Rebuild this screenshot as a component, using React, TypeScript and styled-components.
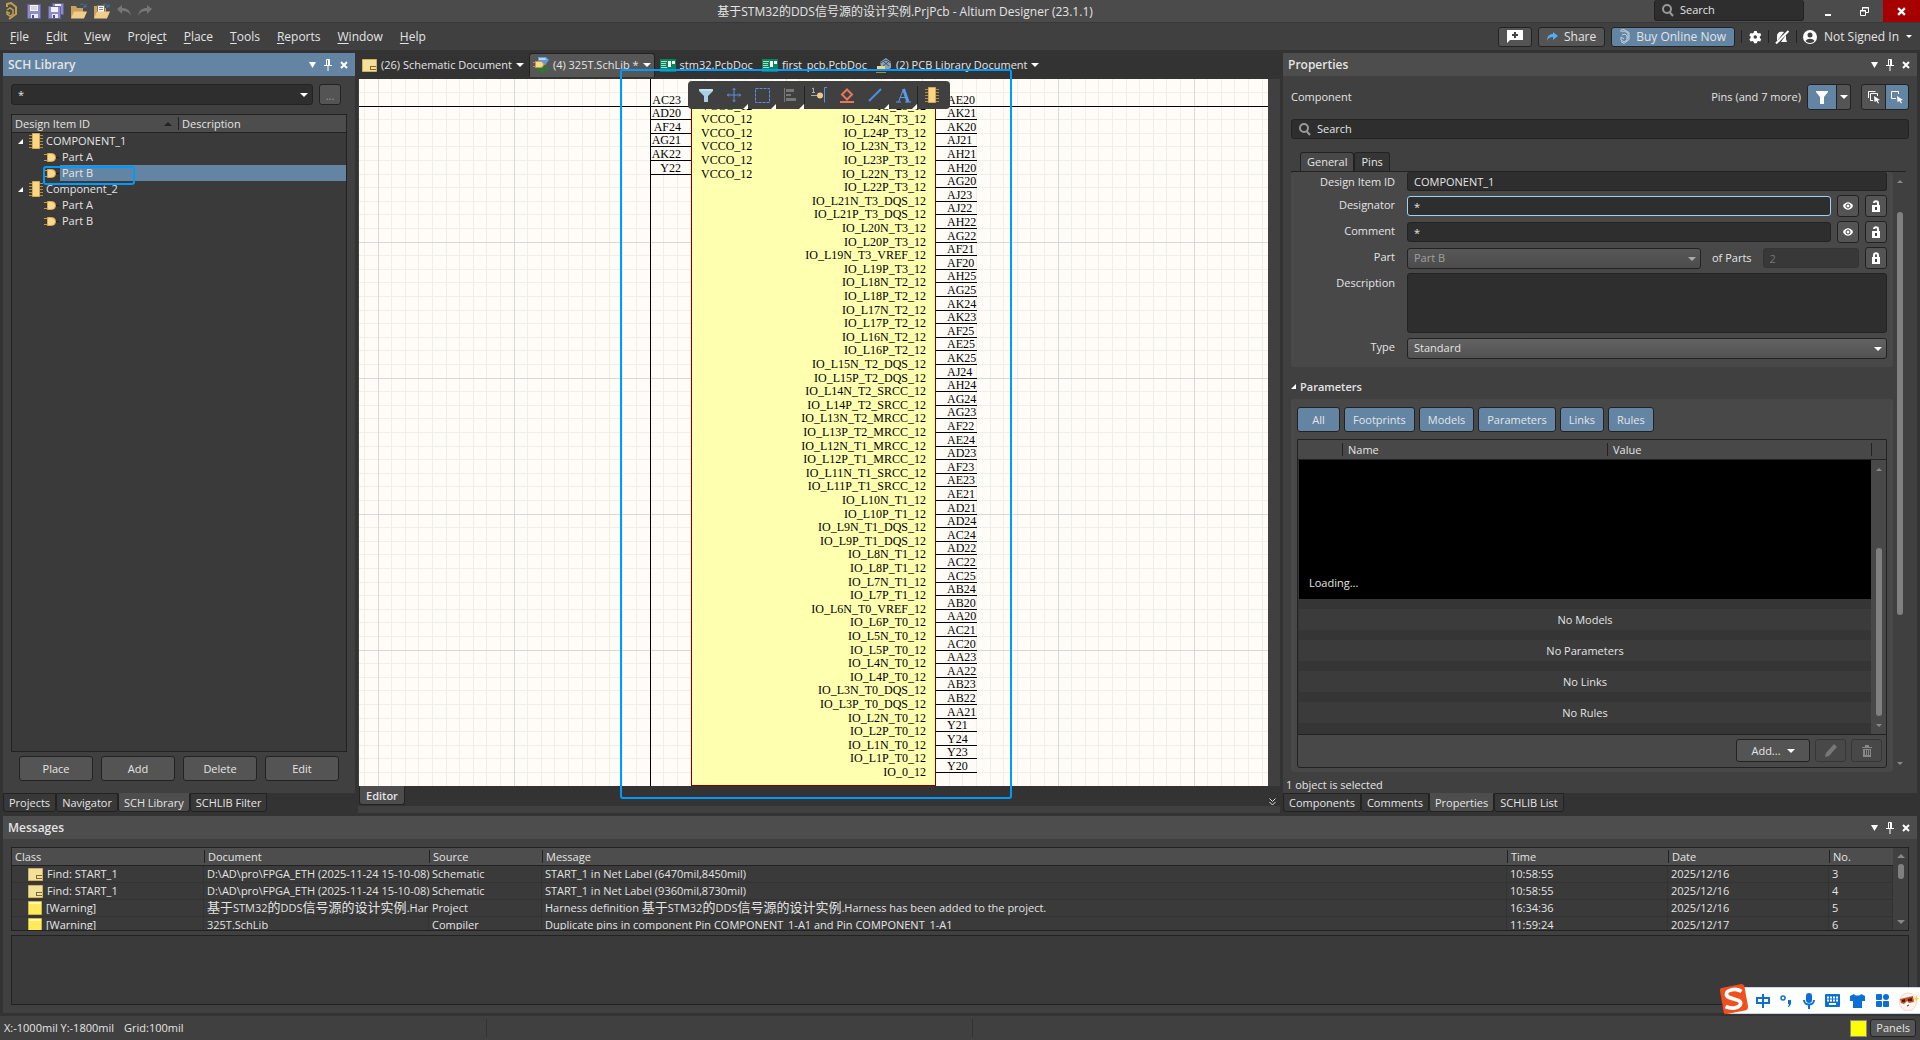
import React from "react";
import styled, { createGlobalStyle, css } from "styled-components";

const c = {
  gap: "#333333",
  panel: "#404040",
  head: "#4d4d4d",
  group: "#484848",
  list: "#3a3a3a",
  field: "#2e2e2e",
  edge: "#222222",
  button: "#545454",
  accent: "#6384a3",
  text: "#e4e4e4",
  mark: "#0099ff",
};

const Global = createGlobalStyle`
  * { box-sizing: border-box; }
  body { margin: 0; background: ${c.gap}; }
  body, button, input, select, textarea {
    font-family: "Open Sans", "Noto Sans", "Noto Sans CJK SC", sans-serif;
    font-size: 11px;
    line-height: 16px;
    color: ${c.text};
  }
  button, input, select, textarea { margin: 0; padding: 0; border: 0; outline: 0; }
  svg { display: block; flex: none; }
`;

/* ---------- icons ---------- */

const Caret = ({ w = 8, up = false, fill = "#fff" }: { w?: number; up?: boolean; fill?: string }) => (
  <svg width={w} height={w / 2} viewBox="0 0 8 4">
    <path d={up ? "M0 4h8L4 0z" : "M0 0h8L4 4z"} fill={fill} />
  </svg>
);

const Pin = () => (
  <svg width="8" height="12" viewBox="0 0 8 12" fill="none" stroke="#fff">
    <path d="M2.5 6.5v-6h3v6M0 6.5h8M4 7v5" />
    <path d="M5 1v5" strokeWidth="2" />
  </svg>
);

const Cross = ({ size = 8 }: { size?: number }) => (
  <svg width={size} height={size} viewBox="0 0 8 8" stroke="#fff" strokeWidth="2">
    <path d="M1 1l6 6M7 1L1 7" />
  </svg>
);

const Magnifier = () => (
  <svg width="12" height="14" viewBox="0 0 12 14" fill="none" stroke="#999" strokeWidth="2">
    <circle cx="5" cy="6" r="4" />
    <path d="M7.500 9l3.500 4" />
  </svg>
);

const Logo = () => (
  <svg width="12" height="18" viewBox="0 0 12 18" fill="none" stroke="#c0a050">
    <path d="M1 5V2l4-1 5 4v7l-7 5" strokeWidth="2" />
    <path d="M1 8l3-2 3 2v4l-3 2-3-2V10l3 1.500" strokeWidth="1.500" />
  </svg>
);

const Disk = () => (
  <svg width="14" height="15" viewBox="0 0 14 15">
    <path d="M.5.5h13v14H.5z" fill="#8d8bc8" stroke="#65639c" />
    <path d="M3 1h8v6H3z" fill="#f2f2f6" />
    <path d="M4 3h6M4 5h6" stroke="#bbb" />
    <path d="M4 10h7v4H4z" fill="#e8e8ee" />
    <path d="M5 11h2v3H5z" fill="#504e80" />
  </svg>
);

const Disks = () => (
  <svg width="16" height="16" viewBox="0 0 16 16">
    <path d="M4.500.5h11v11h-11z" fill="#8d8bc8" stroke="#65639c" />
    <path d="M7 1h6v3H7z" fill="#f2f2f6" />
    <path d="M.5 3.500h12v12H.5z" fill="#8d8bc8" stroke="#65639c" />
    <path d="M3 4h7v5H3z" fill="#f2f2f6" />
    <path d="M4 11h6v4H4z" fill="#e8e8ee" />
    <path d="M5 12h2v3H5z" fill="#504e80" />
  </svg>
);

const Folder = ({ doc = false }: { doc?: boolean }) => (
  <svg width="16" height="16" viewBox="0 0 16 16">
    <path d="M0 15V3h5l1 2h6v10z" fill="#c9a25c" />
    {doc && <path d="M3.500 2.500h7v9h-7z" fill="#f6f6f6" stroke="#777" />}
    {doc && <path d="M5 4.500h4M5 6.500h4" stroke="#888" />}
    <path d="M0 15.500l3-7h13l-3 7z" fill="#f0cd88" />
    <path d="M9 2c2-2 4-1 5 2m-2 0h3V1" fill="none" stroke="#3f78a8" />
  </svg>
);

const Undo = ({ flip = false }: { flip?: boolean }) => (
  <svg width="14" height="12" viewBox="0 0 14 12">
    <path
      d={flip ? "M14 4L9 0v3C4 3 1 5 0 11c2-4 5-5 9-5v3z" : "M0 4l5-4v3c5 0 8 2 9 8-2-4-5-5-9-5v3z"}
      fill="#767676"
    />
  </svg>
);

const Chip = () => (
  <svg width="14" height="16" viewBox="0 0 14 16">
    <path d="M0 2.500h14M0 5.500h14M0 8.500h14M0 11.500h14M0 14.500h14" stroke="#a98d4a" />
    <path d="M3.500.5h7v15h-7z" fill="#f9d687" stroke="#d8ab48" />
  </svg>
);

const Gate = () => (
  <svg width="15" height="9" viewBox="0 0 15 9">
    <path d="M0 1.500h4M0 7.500h4" stroke="#c59a4a" />
    <path d="M12 4.500h3" stroke="#1e1e1e" />
    <path d="M3.500.5h4a4 4 0 0 1 0 8h-4z" fill="#f8d98c" stroke="#d8a850" />
  </svg>
);

const Expander = () => (
  <svg width="5" height="5" viewBox="0 0 5 5">
    <path d="M5 0v5H0z" fill="#fff" />
  </svg>
);

const SheetIcon = () => (
  <svg width="15" height="13" viewBox="0 0 15 13">
    <path d="M.5.5h14v12H.5z" fill="#f3e09a" stroke="#cdb25a" />
    <path d="M8 7.500h6M8 10.500h6M8.500 7v4" stroke="#7f6a2a" />
  </svg>
);

const NoteIcon = () => (
  <svg width="14" height="14" viewBox="0 0 14 14">
    <path d="M.5.5h13v13H.5z" fill="#ffeb5a" stroke="#c9b53c" />
    <path d="M1 1h12v2H1z" fill="#fff7b8" />
  </svg>
);

const LibIcon = () => (
  <svg width="16" height="16" viewBox="0 0 16 16">
    <path d="M6 9l2 6M9 9l1 7M12 8l1 6M4 11l2 3M14 10l1 3" stroke="#2a7a2e" strokeWidth="2" />
    <path d="M5 0h8l3 3-3 4H5z" fill="#5b9ae0" />
    <path d="M6 1h6l2 2H6z" fill="#b5d3f4" />
    <path d="M0 5.500h3M0 9.500h3M10 7.500h3" stroke="#b08c40" />
    <path d="M2.500 4.500h5a3 3 0 0 1 0 6h-5z" fill="#f6da8e" stroke="#c59a4a" />
  </svg>
);

const PcbIcon = () => (
  <svg width="16" height="13" viewBox="0 0 16 13">
    <path d="M0 0h16v13H0z" fill="#0d8459" />
    <path d="M1 2.500h6M1 4.500h5M1 6.500h5M1 8.500h6" stroke="#a8dcc4" />
    <path d="M8 2h3v6H8zM12 2h3v3h-3z" fill="#f2fbf6" />
    <path d="M2 11.500h1M5 11.500h1M8 11.500h1M11 11.500h1" stroke="#d8f0e4" />
  </svg>
);

const PcbLibIcon = () => (
  <svg width="16" height="15" viewBox="0 0 16 15">
    <path d="M4 4l6-4 5 4v6l-4 2-6-3z" fill="#8ba3b5" />
    <path d="M4 5l6-3 5 3M8 4l5 4M7 8l5-4" stroke="#3d5364" fill="none" />
    <path d="M1 8h8v5H1z" fill="#f3d27c" />
    <path d="M0 14.500h10" stroke="#b08c40" />
  </svg>
);

/* ---------- shared controls ---------- */

const Btn = styled.button<{ $on?: boolean; $w?: number; $flat?: boolean }>`
  display: flex;
  align-items: center;
  justify-content: center;
  gap: 6px;
  width: ${(p) => (p.$w ? `${p.$w}px` : "auto")};
  border: 1px solid ${(p) => (p.$flat ? "#363636" : c.edge)};
  border-radius: 3px;
  background: ${(p) => (p.$on ? c.accent : p.$flat ? "transparent" : c.button)};
  white-space: nowrap;
  flex: none;
`;

const fieldBase = css`
  min-width: 0;
  height: 20px;
  padding: 0 6px;
  border: 1px solid ${c.edge};
  border-radius: 3px;
  background: ${c.field};
`;

const Field = styled.input<{ $focus?: boolean }>`
  ${fieldBase}
  flex: 1;
  border-color: ${(p) => (p.$focus ? "#9fd0f5" : c.edge)};
  &:disabled { color: #777; background: #383838; border-color: #343434; }
`;

const Area = styled.textarea`
  ${fieldBase}
  flex: 1;
  height: 60px;
  resize: none;
`;

const SelectBox = styled.div<{ $w?: number }>`
  position: relative;
  display: flex;
  flex: ${(p) => (p.$w ? `0 0 ${p.$w}px` : "1")};
  & > svg { position: absolute; right: 5px; top: 9px; pointer-events: none; }
`;

const SelectInput = styled.select<{ $dark?: boolean }>`
  ${fieldBase}
  flex: 1;
  height: 21px;
  appearance: none;
  background: ${(p) => (p.$dark ? c.field : "linear-gradient(#626262, #525252)")};
  &:disabled { color: #a0a0a0; opacity: 1; background: linear-gradient(#575757, #4c4c4c); }
`;

const SearchBox = styled.label<{ $h: number }>`
  display: flex;
  align-items: center;
  gap: 6px;
  height: ${(p) => p.$h}px;
  padding: 0 7px;
  border: 1px solid ${c.edge};
  border-radius: 3px;
  background: ${c.field};
  & > input { flex: 1; min-width: 0; background: transparent; }
  & > input::placeholder { color: ${c.text}; opacity: 1; }
`;

const Panel = styled.section`
  display: flex;
  flex-direction: column;
  flex: 1;
  min-height: 0;
  background: ${c.panel};
`;

const PanelHead = styled.header<{ $on?: boolean }>`
  display: flex;
  align-items: center;
  gap: 8px;
  height: 23px;
  padding: 0 7px 0 5px;
  background: ${(p) => (p.$on ? c.accent : c.head)};
  flex: none;
`;

const PanelTitle = styled.h2`
  flex: 1;
  margin: 0;
  font-size: 12px;
  line-height: 16px;
  font-weight: 600;
`;

const IconButton = styled.button`
  display: flex;
  align-items: center;
  justify-content: center;
  background: transparent;
  flex: none;
`;

const PanelHeader = ({ title, on }: { title: string; on?: boolean }) => (
  <PanelHead $on={on}>
    <PanelTitle>{title}</PanelTitle>
    <IconButton aria-label="Panel menu"><svg width="7" height="6" viewBox="0 0 7 6"><path d="M0 0h7L3.500 6z" fill="#fff" /></svg></IconButton>
    <IconButton aria-label="Pin panel"><Pin /></IconButton>
    <IconButton aria-label="Close panel"><Cross /></IconButton>
  </PanelHead>
);

const TabStrip = styled.nav`
  display: flex;
  align-items: flex-start;
  height: 23px;
  background: ${c.gap};
  flex: none;
`;

const PanelTab = styled.button<{ $on?: boolean }>`
  height: 19px;
  padding: 0 5px;
  border: 1px solid ${c.edge};
  border-top-color: ${(p) => (p.$on ? c.head : c.edge)};
  border-radius: 0 0 3px 3px;
  background: ${(p) => (p.$on ? c.head : "#383838")};
  white-space: nowrap;
`;

const Thumb = styled.i<{ $h: number }>`
  width: 6px;
  height: ${(p) => p.$h}px;
  border-radius: 3px;
  background: #808080;
`;

/* ---------- page frame ---------- */

const Page = styled.div`
  display: flex;
  flex-direction: column;
  min-width: 1280px;
  height: 100vh;
  min-height: 1040px;
  overflow: hidden;
  background: ${c.gap};
`;

const TitleBar = styled.header`
  display: grid;
  grid-template-columns: 1fr auto 1fr;
  align-items: center;
  height: 23px;
  padding-left: 6px;
  background: #4b4b4b;
  border-bottom: 1px solid #383838;
  flex: none;
`;

const QuickBar = styled.div`
  display: flex;
  align-items: center;
  gap: 6px;
  & > :first-child { margin-right: 3px; }
  & > :nth-child(n + 2) { margin-right: 1px; }
`;

const Caption = styled.h1`
  margin: 0;
  padding: 2px 116px 0 0;
  font-size: 12px;
  line-height: 16px;
  font-weight: 400;
`;

const WindowTools = styled.div`
  display: flex;
  justify-content: flex-end;
  align-self: stretch;
  & > label { width: 150px; border-top: 0; margin-right: 5px; }
`;

const WinButton = styled(IconButton)<{ $close?: boolean }>`
  width: 37px;
  background: ${(p) => (p.$close ? "#a60000" : "transparent")};
`;

const MenuBar = styled.nav`
  display: flex;
  align-items: center;
  gap: 17px;
  height: 27px;
  padding: 0 8px 0 10px;
  background: ${c.panel};
  flex: none;
`;

const MenuItem = styled.button`
  background: transparent;
  font-size: 12px;
  & u { text-underline-offset: 2px; }
`;

const MenuRight = styled.div`
  display: flex;
  align-items: center;
  gap: 6px;
  margin-left: auto;
  & > button { height: 20px; font-size: 12px; }
`;

const Bar = styled.i`
  width: 1px;
  height: 13px;
  background: ${c.edge};
`;

const Work = styled.main`
  display: flex;
  flex: 1;
  min-height: 0;
`;

const SidePanel = styled.div<{ $w: number }>`
  display: flex;
  flex-direction: column;
  flex: 0 0 ${(p) => p.$w}px;
  min-width: 0;
  padding-top: 3px;
  margin: 0 3px;
`;

/* ---------- SCH Library ---------- */

const LibTop = styled.div`
  display: flex;
  gap: 6px;
  padding: 8px 14px 9px 8px;
  & > button { width: 22px; height: 21px; align-items: flex-end; color: #999; }
`;

const Tree = styled.div`
  display: flex;
  flex-direction: column;
  flex: 1;
  margin: 0 8px;
  border: 1px solid ${c.edge};
  background: ${c.list};
`;

const TreeHead = styled.div`
  display: flex;
  align-items: center;
  height: 18px;
  background: ${c.head};
  border-bottom: 1px solid ${c.edge};
  & > span { padding-left: 3px; }
  & > span:first-child { display: flex; align-items: center; justify-content: space-between; width: 166px; padding-right: 6px; }
`;

const TreeRow = styled.div<{ $leaf?: boolean }>`
  position: relative;
  display: flex;
  align-items: center;
  gap: 3px;
  height: 16px;
  padding-left: ${(p) => (p.$leaf ? 32 : 6)}px;
`;

const TreeLabel = styled.span<{ $on?: boolean }>`
  flex: 1;
  margin-left: -2px;
  padding-left: 2px;
  background: ${(p) => (p.$on ? c.accent : "transparent")};
`;

const TreeIcon = styled.span`
  display: flex;
  margin-left: 3px;
`;

const RowMark = styled.i`
  position: absolute;
  left: 31px;
  top: 1px;
  width: 92px;
  height: 19px;
  border: 2px solid ${c.mark};
  border-radius: 3px;
  z-index: 1;
`;

const LibButtons = styled.div`
  display: flex;
  gap: 8px;
  padding: 4px 16px 12px;
  & > button { flex: 1; height: 25px; }
`;

const LibraryPanel = () => (
  <SidePanel $w={352}>
    <Panel>
      <PanelHeader title="SCH Library" on />
      <LibTop>
        <SelectBox>
          <SelectInput $dark aria-label="Filter"><option>*</option></SelectInput>
          <Caret />
        </SelectBox>
        <Btn aria-label="Browse">...</Btn>
      </LibTop>
      <Tree>
        <TreeHead>
          <span>Design Item ID <Caret up fill="#222" /></span>
          <Bar />
          <span>Description</span>
        </TreeHead>
        {["COMPONENT_1", "Component_2"].map((name, i) => (
          <React.Fragment key={name}>
            <TreeRow><Expander /><TreeIcon><Chip /></TreeIcon><TreeLabel>{name}</TreeLabel></TreeRow>
            <TreeRow $leaf><Gate /><TreeLabel>Part A</TreeLabel></TreeRow>
            <TreeRow $leaf><Gate /><TreeLabel $on={i === 0}>Part B</TreeLabel>{i === 0 && <RowMark />}</TreeRow>
          </React.Fragment>
        ))}
      </Tree>
      <LibButtons>
        {["Place", "Add", "Delete", "Edit"].map((t) => <Btn key={t}>{t}</Btn>)}
      </LibButtons>
    </Panel>
    <TabStrip>
      {["Projects", "Navigator", "SCH Library", "SCHLIB Filter"].map((t) => (
        <PanelTab key={t} $on={t === "SCH Library"}>{t}</PanelTab>
      ))}
    </TabStrip>
  </SidePanel>
);

/* ---------- schematic editor ---------- */

const Center = styled.div`
  position: relative;
  display: flex;
  flex-direction: column;
  flex: 1;
  min-width: 0;
  margin-bottom: 3px;
  background: ${c.panel};
`;

const DocTabs = styled.nav`
  display: flex;
  align-items: center;
  gap: 1px;
  height: 29px;
  background: ${c.gap};
  overflow: hidden;
  flex: none;
`;

const DocTab = styled.button<{ $on?: boolean }>`
  display: flex;
  align-items: center;
  gap: 4px;
  height: 24px;
  padding: 0 3px;
  border: 1px solid ${(p) => (p.$on ? c.edge : "transparent")};
  border-bottom: 0;
  border-radius: 3px 3px 0 0;
  background: ${(p) => (p.$on ? "#565656" : "transparent")};
  white-space: nowrap;
`;

const Sheet = styled.div`
  position: relative;
  flex: 1;
  min-height: 0;
  margin: 0 12px 0 1px;
  overflow: hidden;
  background: #fffcf7;
  & > svg { width: 100%; height: 100%; font-family: "Liberation Serif", serif; font-size: 12px; }
`;

const ToolBox = styled.div`
  position: absolute;
  left: 329px;
  top: 2px;
  display: flex;
  align-items: center;
  height: 28px;
  padding: 0 4px;
  border-radius: 4px;
  background: ${c.panel};
  & > i { height: 18px; }
`;

const Tool = styled(IconButton)<{ $more?: boolean }>`
  position: relative;
  width: 28px;
  height: 28px;
  ${(p) => p.$more && css`
    &::after {
      content: "";
      position: absolute;
      right: 0;
      bottom: 0;
      border-left: 5px solid transparent;
      border-bottom: 5px solid #fff;
    }
  `}
`;

const SelectionMark = styled.i`
  position: absolute;
  left: 262px;
  top: 19px;
  width: 392px;
  height: 730px;
  border: 2px solid ${c.mark};
  border-radius: 3px;
  pointer-events: none;
`;

const EditorFoot = styled.div`
  display: flex;
  justify-content: space-between;
  height: 20px;
  padding-left: 1px;
  margin-bottom: 7px;
  background: ${c.gap};
  flex: none;
  & > svg { align-self: flex-end; margin-right: 4px; }
`;

const EditorTab = styled(PanelTab)`
  padding: 0 6px;
  font-weight: 600;
`;

const leftPins = ["AC23", "AD20", "AF24", "AG21", "AK22", "Y22"];

const rightPins = `AE20 AK21 AK20 AJ21 AH21 AH20 AG20 AJ23 AJ22 AH22 AG22 AF21 AF20 AH25 AG25 AK24 AK23
AF25 AE25 AK25 AJ24 AH24 AG24 AG23 AF22 AE24 AD23 AF23 AE23 AE21 AD21 AD24 AC24 AD22 AC22 AC25 AB24
AB20 AA20 AC21 AC20 AA23 AA22 AB23 AB22 AA21 Y21 Y24 Y23 Y20`.split(/\s+/);

const pairTail: Record<number, string> = {
  21: "T3_DQS", 15: "T2_DQS", 14: "T2_SRCC", 13: "T2_MRCC", 12: "T1_MRCC", 11: "T1_SRCC", 9: "T1_DQS", 3: "T0_DQS",
};

const pinName = (row: number) => {
  if (row === 0) return "IO_25_12";
  if (row === 49) return "IO_0_12";
  const pair = 24 - Math.floor((row - 1) / 2);
  const side = row % 2 ? "N" : "P";
  const bank = pair > 18 ? 3 : pair > 12 ? 2 : pair > 6 ? 1 : 0;
  const vref = side === "N" && (pair === 19 || pair === 6);
  return `IO_L${pair}${side}_${vref ? `T${bank}_VREF` : pairTail[pair] ?? `T${bank}`}_12`;
};

const rowY = (row: number) => 27 + Math.floor((row * 136) / 10);
const steps = Array.from({ length: 10 }, (_, i) => Math.floor((i * 136) / 10));

const Schematic = () => (
  <svg shapeRendering="crispEdges" role="img" aria-label="COMPONENT_1 Part B">
    <defs>
      <pattern id="grid" x="19" y="27" width="136" height="136" patternUnits="userSpaceOnUse">
        {steps.map((s) => (
          <g key={s} fill="#efefea">
            <rect x={s} y="0" width="1" height="136" />
            <rect x="0" y={s} width="136" height="1" />
          </g>
        ))}
        <path d="M0 0h136v1H0zM0 0h1v136H0z" fill="#d9d9d6" />
      </pattern>
    </defs>
    <rect width="100%" height="100%" fill="url(#grid)" />
    <rect x="0" y="27" width="100%" height="1" />
    <rect x="291" y="0" width="1" height="100%" />
    <rect x="332" y="10" width="245" height="697" fill="#ffffb0" />
    <path d="M332.500 10v696.500h244V10" fill="none" stroke="#800000" />
    {leftPins.map((pin, i) => (
      <g key={pin}>
        <rect x="291" y={rowY(i)} width="41" height="1" />
        <text x="322" y={rowY(i) - 2} textAnchor="end">{pin}</text>
        <text x="342" y={rowY(i) + 4}>VCCO_12</text>
      </g>
    ))}
    {rightPins.map((pin, i) => (
      <g key={pin}>
        <rect x="577" y={rowY(i)} width="41" height="1" />
        <text x="588" y={rowY(i) - 2}>{pin}</text>
        <text x="567" y={rowY(i) + 4} textAnchor="end">{pinName(i)}</text>
      </g>
    ))}
  </svg>
);

const blue = "#5f8fe0";

const Editor = () => (
  <Center>
    <DocTabs>
      <DocTab><SheetIcon />(26) Schematic Document <Caret /></DocTab>
      <DocTab $on><LibIcon />(4) 325T.SchLib * <Caret /></DocTab>
      <DocTab><PcbIcon />stm32.PcbDoc</DocTab>
      <DocTab><PcbIcon />first_pcb.PcbDoc</DocTab>
      <DocTab><PcbLibIcon />(2) PCB Library Document <Caret /></DocTab>
    </DocTabs>
    <Sheet>
      <Schematic />
      <ToolBox>
        <Tool aria-label="Filter"><svg width="14" height="13" viewBox="0 0 14 13"><path d="M0 0h14v2L9 7v6H5V7L0 2z" fill="#a9cfe4" /><path d="M1 1h12" stroke="#dff1fa" /></svg></Tool>
        <Tool $more aria-label="Move"><svg width="14" height="14" viewBox="0 0 14 14" fill="none" stroke={blue}><path d="M7 0v14M0 7h14M5.500 2L7 .5 8.500 2M5.500 12L7 13.500 8.500 12M2 5.500L.5 7 2 8.500M12 5.500L13.500 7 12 8.500" /></svg></Tool>
        <Tool $more aria-label="Select area"><svg width="15" height="15" viewBox="0 0 15 15"><path d="M.5.5h14v14H.5z" fill="none" stroke={blue} strokeDasharray="3 1" /></svg></Tool>
        <Tool $more aria-label="Align"><svg width="12" height="14" viewBox="0 0 12 14" fill="#777"><path d="M0 0h1v14H0zM2 1h8v3H2zM2 6h5v2H2zM2 10h10v3H2z" /></svg></Tool>
        <Bar />
        <Tool aria-label="Place pin"><svg width="16" height="16" viewBox="0 0 16 16" fill="none"><path d="M0 8.500h9" stroke="#aaa" /><path d="M1 2l1.500-1v5M1 5.500h3" stroke="#aaa" /><circle cx="9" cy="8.500" r="3" fill="#f0c88a" /><path d="M16 .5h-2.500v15" stroke={blue} /></svg></Tool>
        <Tool aria-label="Place polygon"><svg width="14" height="15" viewBox="0 0 14 15" fill="none" stroke="#e5785a" strokeWidth="2"><path d="M7 1.500l5 5-5 5-5-5zM0 14h14" /></svg></Tool>
        <Tool $more aria-label="Place line"><svg width="14" height="14" viewBox="0 0 14 14"><path d="M1 13L13 1" stroke="#4a8fe0" strokeWidth="2" /></svg></Tool>
        <Tool $more aria-label="Place text"><svg width="15" height="15" viewBox="0 0 15 15" fill="none" stroke="#5a9ae8"><path d="M7.500 1L2.500 14M4 9.500h6M0 14h5M9 14h6" /><path d="M7.500 1L12 14" strokeWidth="3" /></svg></Tool>
        <Bar />
        <Tool aria-label="Place part"><Chip /></Tool>
      </ToolBox>
    </Sheet>
    <EditorFoot>
      <EditorTab $on>Editor</EditorTab>
      <svg width="7" height="8" viewBox="0 0 7 8" fill="none" stroke="#ddd"><path d="M.5.5l3 3 3-3M.5 4l3 3 3-3" /></svg>
    </EditorFoot>
    <SelectionMark />
  </Center>
);

/* ---------- Properties ---------- */

const ScopeRow = styled.div`
  display: flex;
  align-items: center;
  padding: 8px 8px 9px;
  & > span:first-child { margin-right: auto; }
  & > span { margin-right: 6px; }
  & > button { height: 26px; border-radius: 0; }
  & > button:nth-of-type(odd) { border-radius: 3px 0 0 3px; }
  & > button:nth-of-type(even) { border-radius: 0 3px 3px 0; border-left: 0; }
  & > button:nth-of-type(2) { margin-right: 10px; }
`;

const PropSearch = styled.div`
  padding: 0 8px;
`;

const PropTabs = styled.div`
  display: flex;
  height: 20px;
  margin: 13px 11px 0 8px;
  padding-left: 9px;
  border-bottom: 1px solid ${c.edge};
`;

const PropTab = styled.button<{ $on?: boolean }>`
  padding: 0 6px;
  border: 1px solid ${c.edge};
  border-bottom: 0;
  border-radius: 3px 3px 0 0;
  background: ${(p) => (p.$on ? c.group : "#353535")};
`;

const PropScroll = styled.div`
  display: flex;
  flex: 1;
  min-height: 0;
`;

const PropBody = styled.div`
  flex: 1;
  min-width: 0;
  padding-left: 8px;
`;

const Track = styled.div<{ $w: number }>`
  display: flex;
  flex-direction: column;
  align-items: center;
  width: ${(p) => p.$w}px;
  flex: none;
  & > svg:last-child { margin-top: auto; }
`;

const OuterTrack = styled(Track)`
  padding: 8px 10px 6px 0;
  gap: 29px;
`;

const Group = styled.div`
  display: flex;
  flex-direction: column;
  padding: 8px 6px 4px;
  border-radius: 3px;
  background: ${c.group};
`;

const FormGroup = styled(Group)`
  gap: 4px;
  padding: 0 6px 8px;
`;

const FormRow = styled.div`
  display: flex;
  align-items: center;
  gap: 6px;
  min-height: 22px;
  & > label:first-child { width: 98px; text-align: right; margin-right: 6px; align-self: flex-start; line-height: 20px; flex: none; }
  & > button { width: 22px; height: 22px; }
`;

const FirstRow = styled(FormRow)`
  min-height: 0;
  height: 19px;
  & > input { height: 19px; border-top: 0; }
`;

const PartsLabel = styled.label`
  padding: 0 5px;
`;

const Section = styled.h3`
  display: flex;
  align-items: center;
  gap: 4px;
  height: 32px;
  margin: 0;
  padding-top: 7px;
  font-size: 11px;
  line-height: 16px;
  font-weight: 600;
`;

const Chips = styled.div`
  display: flex;
  gap: 4px;
  margin-bottom: 7px;
  & > button { height: 25px; padding: 0 8px; min-width: 43px; }
`;

const Grid = styled.div`
  border: 1px solid ${c.edge};
  border-radius: 0 0 3px 3px;
`;

const GridHead = styled.div`
  display: grid;
  grid-template-columns: 44px 265fr 264fr 15px;
  height: 20px;
  align-items: center;
  border-bottom: 1px solid ${c.edge};
  & > span + span { padding-left: 5px; border-left: 1px solid ${c.edge}; height: 13px; line-height: 13px; }
`;

const GridBody = styled.div`
  display: flex;
  height: 275px;
  border-bottom: 1px solid ${c.edge};
`;

const GridRows = styled.div`
  flex: 1;
  padding-left: 1px;
  background: #353535;
`;

const Preview = styled.div`
  display: flex;
  align-items: flex-end;
  height: 139px;
  padding: 0 10px 8px;
  background: #000;
`;

const EmptyRow = styled.div`
  height: 21px;
  margin-top: 10px;
  line-height: 21px;
  text-align: center;
  background: #3b3b3b;
`;

const InnerTrack = styled(Track)`
  padding: 8px 0 7px;
  & > i { margin-top: 77px; }
`;

const GridFoot = styled.div`
  display: flex;
  justify-content: flex-end;
  gap: 5px;
  padding: 4px 4px 5px;
  & > button { height: 23px; }
`;

const Selected = styled.p`
  margin: 0;
  padding: 6px 3px 0;
  line-height: 16px;
`;

const Eye = () => (
  <svg width="10" height="8" viewBox="0 0 10 8"><path d="M0 4c2-5 8-5 10 0-2 5-8 5-10 0z" fill="#fff" /><circle cx="5" cy="4" r="2" fill="#fff" stroke="#444" /></svg>
);

const Lock = ({ open = false }: { open?: boolean }) => (
  <svg width="8" height="12" viewBox="0 0 8 12"><path d="M0 5h8v7H0z" fill="#fff" /><path d={open ? "M2 3C2 .5 6 .5 6 3v3" : "M2 6V3C2 .5 6 .5 6 3v3"} fill="none" stroke="#fff" strokeWidth="2" /><path d="M3 7h2v3H3z" fill="#444" /></svg>
);

const PickIcon = ({ many = false }: { many?: boolean }) => (
  <svg width="12" height="14" viewBox="0 0 12 14" fill="none" stroke="#fff">
    {many && <path d="M.5 8V1.500h7" />}
    <path d={many ? "M5 10.500H2.500v-7h7V6" : "M5 8.500H.5v-7h7V4"} />
    <path d="M6 6l6 4-2.500.5L11 13l-1 .5-1.500-2.500L6.500 12z" fill="#fff" stroke="none" />
  </svg>
);

const PropertiesPanel = () => (
  <SidePanel $w={634}>
    <Panel>
      <PanelHeader title="Properties" />
      <ScopeRow>
        <span>Component</span>
        <span>Pins (and 7 more)</span>
        <Btn $on $w={30} aria-label="Selection filter"><svg width="12" height="13" viewBox="0 0 12 13"><path d="M0 0h12v1L8 6v7H4V6L0 1z" fill="#fff" /></svg></Btn>
        <Btn $w={14} aria-label="Filter options"><Caret /></Btn>
        <Btn $w={25} aria-label="Multiple selection"><PickIcon many /></Btn>
        <Btn $on $w={23} aria-label="Single selection"><PickIcon /></Btn>
      </ScopeRow>
      <PropSearch>
        <SearchBox $h={20}><Magnifier /><input placeholder="Search" aria-label="Search properties" /></SearchBox>
      </PropSearch>
      <PropTabs>
        <PropTab $on>General</PropTab>
        <PropTab>Pins</PropTab>
      </PropTabs>
      <PropScroll>
        <PropBody>
          <FormGroup>
            <FirstRow><label htmlFor="item">Design Item ID</label><Field id="item" defaultValue="COMPONENT_1" /></FirstRow>
            <FormRow>
              <label htmlFor="designator">Designator</label><Field id="designator" $focus defaultValue="*" />
              <Btn aria-label="Show designator"><Eye /></Btn><Btn aria-label="Lock designator"><Lock open /></Btn>
            </FormRow>
            <FormRow>
              <label htmlFor="comment">Comment</label><Field id="comment" defaultValue="*" />
              <Btn aria-label="Show comment"><Eye /></Btn><Btn aria-label="Lock comment"><Lock open /></Btn>
            </FormRow>
            <FormRow>
              <label htmlFor="part">Part</label>
              <SelectBox $w={294}><SelectInput id="part" disabled><option>Part B</option></SelectInput><Caret fill="#aaa" /></SelectBox>
              <PartsLabel htmlFor="parts">of Parts</PartsLabel>
              <Field id="parts" disabled defaultValue="2" />
              <Btn aria-label="Lock part"><Lock /></Btn>
            </FormRow>
            <FormRow><label htmlFor="desc">Description</label><Area id="desc" /></FormRow>
            <FormRow>
              <label htmlFor="type">Type</label>
              <SelectBox><SelectInput id="type"><option>Standard</option></SelectInput><Caret /></SelectBox>
            </FormRow>
          </FormGroup>
          <Section><Expander />Parameters</Section>
          <Group>
            <Chips>
              {["All", "Footprints", "Models", "Parameters", "Links", "Rules"].map((t) => <Btn $on key={t}>{t}</Btn>)}
            </Chips>
            <Grid>
              <GridHead><span /><span>Name</span><span>Value</span><span /></GridHead>
              <GridBody>
                <GridRows>
                  <Preview>Loading...</Preview>
                  {["No Models", "No Parameters", "No Links", "No Rules"].map((t) => <EmptyRow key={t}>{t}</EmptyRow>)}
                </GridRows>
                <InnerTrack $w={15}><Caret w={6} up fill="#888" /><Thumb $h={168} /><Caret w={6} fill="#888" /></InnerTrack>
              </GridBody>
              <GridFoot>
                <Btn $w={74}>Add... <Caret /></Btn>
                <Btn $flat $w={31} aria-label="Edit"><svg width="12" height="13" viewBox="0 0 12 13"><path d="M0 13l1-4 8-9 3 3-8 9z" fill="#777" /></svg></Btn>
                <Btn $flat $w={31} aria-label="Delete"><svg width="10" height="12" viewBox="0 0 10 12"><path d="M0 2h10v1H0zM3 0h4v2H3zM1 4h8v8H1z" fill="#888" /><path d="M3.500 5v5M5.500 5v5M7.500 5v5" stroke="#484848" /></svg></Btn>
              </GridFoot>
            </Grid>
          </Group>
        </PropBody>
        <OuterTrack $w={24}><Caret w={6} up fill="#888" /><Thumb $h={403} /><Caret w={6} fill="#888" /></OuterTrack>
      </PropScroll>
      <Selected>1 object is selected</Selected>
    </Panel>
    <TabStrip>
      {["Components", "Comments", "Properties", "SCHLIB List"].map((t) => (
        <PanelTab key={t} $on={t === "Properties"}>{t}</PanelTab>
      ))}
    </TabStrip>
  </SidePanel>
);

/* ---------- Messages ---------- */

const MessagesBox = styled.div`
  display: flex;
  flex-direction: column;
  height: 197px;
  margin: 0 3px 3px;
  flex: none;
`;

const MessageFrame = styled.div`
  display: flex;
  height: 84px;
  margin: 8px 8px 4px;
  border: 1px solid ${c.edge};
  background: ${c.list};
  overflow: hidden;
  & > div:first-child { flex: 1; min-width: 0; }
`;

const MessageTable = styled.table`
  width: 100%;
  table-layout: fixed;
  border-collapse: separate;
  border-spacing: 0;
  th, td { padding: 0 3px; white-space: nowrap; text-align: left; font-weight: 400; }
  th { height: 18px; background: ${c.head}; border-bottom: 1px solid ${c.edge}; padding-left: 0; }
  th > span { display: block; height: 13px; line-height: 13px; padding-left: 3px; border-left: 1px solid ${c.edge}; }
  th:first-child > span { border: 0; }
  td { height: 17px; line-height: 16px; border-bottom: 1px solid #333; border-right: 1px solid #333; padding-right: 0; }
  td:first-child { padding-left: 16px; }
`;

const ClassCell = styled.span`
  display: flex;
  align-items: center;
  gap: 4px;
`;

const Han = styled.span`
  font-size: 13px;
  line-height: 13px;
`;

const Details = styled.div`
  flex: 1;
  margin: 0 8px 8px;
  border: 1px solid ${c.edge};
  background: ${c.list};
`;

const MsgTrack = styled(Track)`
  padding: 6px 0;
  gap: 6px;
  background: ${c.panel};
`;

const ETH = "D:\\AD\\pro\\FPGA_ETH (2025-11-24 15-10-08)";
const messages = [
  ["Find: START_1", ETH, "Schematic", "START_1 in Net Label (6470mil,8450mil)", "10:58:55", "2025/12/16", "3"],
  ["Find: START_1", ETH, "Schematic", "START_1 in Net Label (9360mil,8730mil)", "10:58:55", "2025/12/16", "4"],
  ["[Warning]", "基于STM32的DDS信号源的设计实例.Har", "Project", "Harness definition 基于STM32的DDS信号源的设计实例.Harness has been added to the project.", "16:34:36", "2025/12/16", "5"],
  ["[Warning]", "325T.SchLib", "Compiler", "Duplicate pins in component Pin COMPONENT_1-A1 and Pin COMPONENT_1-A1", "11:59:24", "2025/12/17", "6"],
];

const Mixed = ({ text }: { text: string }) => (
  <>{text.split(/([\u4e00-\u9fff]+)/).map((part, i) => (i % 2 ? <Han key={i}>{part}</Han> : part))}</>
);

const Messages = () => (
  <MessagesBox>
    <Panel>
      <PanelHeader title="Messages" />
      <MessageFrame>
        <div>
          <MessageTable>
            <colgroup>
              {["192px", "225px", "113px", "auto", "161px", "161px", "64px"].map((w, i) => <col key={i} style={{ width: w }} />)}
            </colgroup>
            <thead>
              <tr>{["Class", "Document", "Source", "Message", "Time", "Date", "No."].map((h) => <th key={h}><span>{h}</span></th>)}</tr>
            </thead>
            <tbody>
              {messages.map((row, r) => (
                <tr key={r}>
                  {row.map((cell, i) => (
                    <td key={i}>{i ? <Mixed text={cell} /> : <ClassCell>{r < 2 ? <SheetIcon /> : <NoteIcon />}{cell}</ClassCell>}</td>
                  ))}
                </tr>
              ))}
            </tbody>
          </MessageTable>
        </div>
        <MsgTrack $w={15}><Caret w={8} up fill="#888" /><Thumb $h={15} /><Caret w={8} fill="#888" /></MsgTrack>
      </MessageFrame>
      <Details />
    </Panel>
  </MessagesBox>
);

/* ---------- status bar and input method ---------- */

const Status = styled.footer`
  display: grid;
  grid-template-columns: 486fr 486fr 948fr;
  align-items: center;
  height: 24px;
  background: ${c.panel};
  flex: none;
`;

const StatusCell = styled.div`
  display: flex;
  align-items: center;
  gap: 10px;
  height: 18px;
  padding-left: 4px;
  & + & { border-left: 1px solid ${c.gap}; }
`;

const StatusEnd = styled(StatusCell)`
  justify-content: flex-end;
  gap: 3px;
  padding-right: 4px;
  & > i { width: 17px; height: 17px; background: #ffff00; border: 1px solid #888; }
  & > button { height: 18px; padding: 0 5px; }
`;

const Ime = styled.div`
  position: fixed;
  right: 0;
  bottom: 26px;
  display: flex;
  align-items: center;
  justify-content: space-between;
  width: 193px;
  height: 27px;
  padding: 0 1px 0 28px;
  background: #fff;
  border: 1px solid #c8d6ea;
  border-right: 0;
  & > svg:first-child { position: absolute; left: -10px; bottom: -1px; }
`;

const im = "#0b6fd6";

const InputMethod = () => (
  <Ime>
    <svg width="32" height="30" viewBox="0 0 32 32">
      <path d="M1 7Q1 4 4 4L24 0q2 0 3 2l4 22q0 3-2 4L8 32q-3 0-3-2z" fill="#f0501e" />
      <path d="M24 8C18 4 8 6 8 11c0 6 16 4 15 10-1 5-10 6-16 3" fill="none" stroke="#fff" strokeWidth="4" />
    </svg>
    <svg width="14" height="14" viewBox="0 0 14 14" fill="none" stroke={im} strokeWidth="2"><path d="M1 4h12v5H1zM7 0v14" /></svg>
    <svg width="12" height="12" viewBox="0 0 12 12"><circle cx="3" cy="3" r="2" fill="none" stroke={im} strokeWidth="1.500" /><path d="M8 5h3v4l-2 3H8l1-3H8z" fill={im} /></svg>
    <svg width="12" height="16" viewBox="0 0 12 16"><rect x="3" width="6" height="10" rx="3" fill={im} /><path d="M1 7c0 6 10 6 10 0M6 12v4" fill="none" stroke={im} strokeWidth="2" /></svg>
    <svg width="15" height="13" viewBox="0 0 15 13"><rect width="15" height="13" rx="1" fill={im} /><path d="M2 3.500h11M2 6.500h11" stroke="#fff" strokeWidth="2" strokeDasharray="2 1" /><path d="M4 10h7" stroke="#fff" strokeWidth="2" /></svg>
    <svg width="15" height="14" viewBox="0 0 15 14"><path d="M4 0c1 2 6 2 7 0l4 2v5h-3v7H3V7H0V2z" fill={im} /></svg>
    <svg width="13" height="13" viewBox="0 0 13 13" fill={im}><rect width="6" height="6" rx="1" /><circle cx="10" cy="3" r="3" /><rect y="7" width="6" height="6" rx="1" /><rect x="7" y="7" width="6" height="6" rx="1" /></svg>
    <svg width="20" height="20" viewBox="0 0 20 20"><ellipse cx="9" cy="11" rx="8.500" ry="9" fill="#fdf5f2" stroke="#f0d8d0" /><path d="M1 8l13-3 1 6-5 1-2-2-3 3-3-1z" fill="#c8501e" /><path d="M3 9l3-1v3H3zM9 8l4-1v3H9z" fill="#3a2218" /><path d="M8 15l2-1" stroke="#333" /><path d="M17.500 4l1 3 1.500.5-1.500 1-1 2.500-1-2.500-1.500-1 1.500-.5z" fill="#ffd42a" /></svg>
  </Ime>
);

const menus: [string, string, string][] = [
  ["", "F", "ile"], ["", "E", "dit"], ["", "V", "iew"], ["Proje", "c", "t"], ["", "P", "lace"],
  ["", "T", "ools"], ["", "R", "eports"], ["", "W", "indow"], ["", "H", "elp"],
];

const ShareBtn = styled(Btn)`
  padding: 0 8px;
`;

const Account = styled(IconButton)`
  gap: 7px;
`;

export default function App() {
  return (
    <Page>
      <Global />
      <TitleBar>
        <QuickBar>
          <Logo />
          <IconButton aria-label="Save"><Disk /></IconButton>
          <IconButton aria-label="Save all"><Disks /></IconButton>
          <IconButton aria-label="Open"><Folder /></IconButton>
          <IconButton aria-label="Open project"><Folder doc /></IconButton>
          <IconButton aria-label="Undo"><Undo /></IconButton>
          <IconButton aria-label="Redo"><Undo flip /></IconButton>
        </QuickBar>
        <Caption>基于STM32的DDS信号源的设计实例.PrjPcb - Altium Designer (23.1.1)</Caption>
        <WindowTools>
          <SearchBox $h={21}><Magnifier /><input placeholder="Search" aria-label="Search" /></SearchBox>
          <WinButton aria-label="Minimize"><svg width="6" height="10" viewBox="0 0 6 10"><path d="M0 9h6" stroke="#fff" strokeWidth="2" /></svg></WinButton>
          <WinButton aria-label="Restore"><svg width="9" height="9" viewBox="0 0 9 9" fill="none" stroke="#fff"><path d="M2.500 3V.5h6v5H6M.5 3.500h5v5h-5zM2 1h7M0 4h6" /></svg></WinButton>
          <WinButton $close aria-label="Close"><Cross size={9} /></WinButton>
        </WindowTools>
      </TitleBar>
      <MenuBar>
        {menus.map(([a, b, d]) => <MenuItem key={b + d}>{a}<u>{b}</u>{d}</MenuItem>)}
        <MenuRight>
          <Btn $w={34} aria-label="Comment"><svg width="16" height="13" viewBox="0 0 16 13"><path d="M0 0h16v10H3l-3 3z" fill="#fff" /><path d="M8 2v6M5 5h6" stroke="#444" strokeWidth="2" /></svg></Btn>
          <ShareBtn><svg width="11" height="9" viewBox="0 0 11 9"><path d="M6 0l5 4-5 4V5C3 5 1 6 0 9c0-5 2-7 6-7z" fill="#5aa9ee" /></svg>Share</ShareBtn>
          <ShareBtn $on><svg width="10" height="15" viewBox="0 0 10 15" fill="none" stroke="#c4d2de"><path d="M1 3V1l3-.5 5 3v7l-5 4-3-2M2 6l3-1 2 2v4l-3 2-3-2V8l3 2M2 3l2-1 4 2v6" /></svg>Buy Online Now</ShareBtn>
          <Bar />
          <IconButton aria-label="Settings"><svg width="14" height="14" viewBox="0 0 16 16"><path d="M7 1h3l.5 2 1.500 1 2-.7L15 6l-1.500 1.500v1.500L15 10.500 14 13l-2-.5-1.500 1L10 15H7l-.5-1.500-1.500-1-2 .5-1.500-2.500L3 9V7.500L1.500 6 3 3.300l2 .7 1.500-1z" fill="#fff" /><circle cx="8.300" cy="8" r="2" fill="#404040" /></svg></IconButton>
          <Bar />
          <IconButton aria-label="Notifications"><svg width="15" height="14" viewBox="0 0 15 14"><path d="M2 11V6c0-4 4-5 7-4z M6 12h6l-1-3V5z" fill="#fff" /><path d="M1 13.500L13.500 1" stroke="#fff" strokeWidth="2" /></svg></IconButton>
          <Bar />
          <Account><svg width="14" height="14" viewBox="0 0 14 14"><circle cx="7" cy="7" r="7" fill="#fff" /><circle cx="7" cy="5" r="2.500" fill="#404040" /><path d="M2.500 11c2-3 7-3 9 0-2 2.500-7 2.500-9 0z" fill="#404040" /></svg>Not Signed In <Caret w={6} /></Account>
        </MenuRight>
      </MenuBar>
      <Work>
        <LibraryPanel />
        <Editor />
        <PropertiesPanel />
      </Work>
      <Messages />
      <Status>
        <StatusCell><span>X:-1000mil Y:-1800mil</span><span>Grid:100mil</span></StatusCell>
        <StatusCell />
        <StatusEnd><i /><Btn>Panels</Btn></StatusEnd>
      </Status>
      <InputMethod />
    </Page>
  );
}
